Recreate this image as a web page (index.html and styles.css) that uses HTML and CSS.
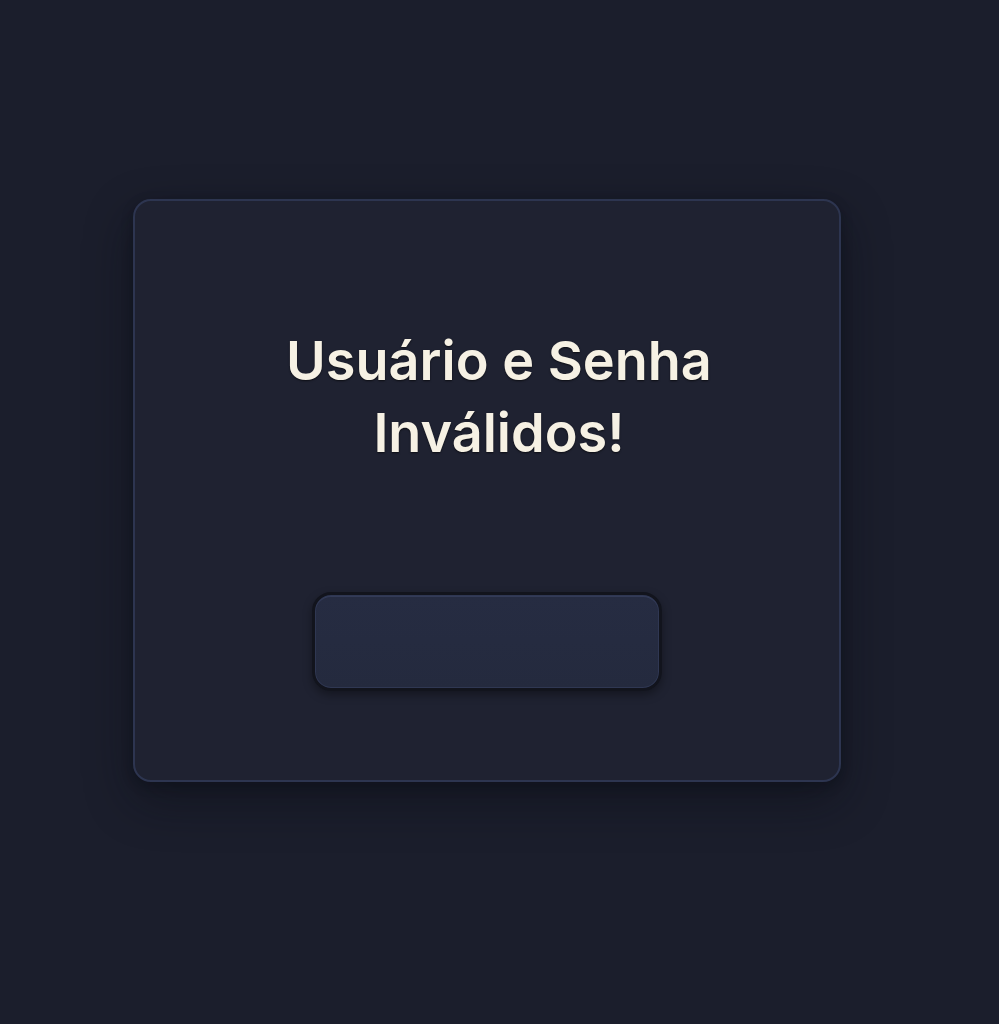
FILE: index.html
```html
<!DOCTYPE html>
<html lang="pt">
<head>
<meta charset="utf-8">
<title>Erro de login</title>
<link rel="stylesheet" href="styles.css">
</head>
<body>
<main class="page">
  <section class="card">
    <h1 class="title">Usuário e Senha<br>Inválidos!</h1>
    <button class="btn" type="button" aria-label="OK"></button>
  </section>
</main>
</body>
</html>
```

FILE: styles.css
```css
html, body {
  margin: 0;
  padding: 0;
  background: #1b1e2c;
}
body {
  width: 999px;
  height: 1024px;
  overflow: hidden;
  font-family: Inter, "Noto Sans", sans-serif;
}
.page {
  padding: 199px 0 0 133px;
}
.card {
  box-sizing: border-box;
  width: 708px;
  height: 583px;
  border: 2px solid #2d3550;
  border-radius: 18px;
  background: #1f2231;
  box-shadow: 0 18px 48px rgba(8, 10, 18, 0.45), 0 4px 12px rgba(8, 10, 18, 0.3);
  display: flex;
  flex-direction: column;
  align-items: center;
  padding-top: 124px;
}
.title {
  margin: 0 0 0 24px;
  font-size: 54px;
  line-height: 72px;
  font-weight: 600;
  color: #f6f1e4;
  text-align: center;
  letter-spacing: 0;
  text-shadow: 0 1px 2px rgba(0, 0, 0, 0.6);
}
.btn {
  box-sizing: border-box;
  margin-top: 123px;
  width: 350px;
  height: 99px;
  border: 3px solid #12141d;
  border-radius: 19px;
  background: linear-gradient(180deg, #262c42 0%, #242a3e 100%);
  box-shadow: inset 0 0 0 1px #2f3752, inset 0 2px 0 #333b58, 0 4px 10px rgba(0, 0, 0, 0.35);
  padding: 0;
  cursor: pointer;
}
```
